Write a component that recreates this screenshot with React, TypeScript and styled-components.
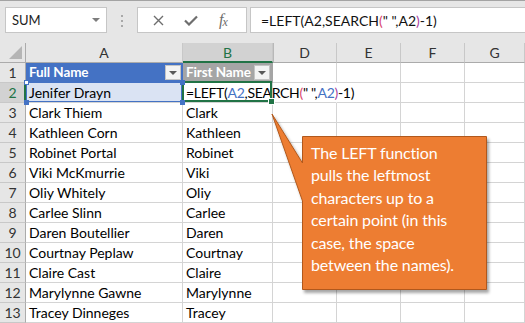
import React from "react";
import styled, { createGlobalStyle, css } from "styled-components";

const Global = createGlobalStyle`
  html, body { margin: 0; padding: 0; background: #fff; }
  * { box-sizing: border-box; }
`;

const Frame = styled.div`
  width: 525px;
  height: 323px;
  background: #e6e6e6;
  border-top: 1px solid #a3a3a3;
  overflow: hidden;
  position: relative;
  display: flex;
  flex-direction: column;
  font-family: Lato, "Liberation Sans", sans-serif;
`;

const Toolbar = styled.div`
  height: 42px;
  flex: none;
  display: flex;
  align-items: flex-start;
  padding: 6px 0 0 5px;
`;

const Box = styled.div`
  height: 26px;
  background: #fff;
  border: 1px solid #c6c6c6;
  display: flex;
  align-items: center;
`;

const NameBox = styled(Box)`
  width: 102px;
  padding: 0 6px;
  justify-content: space-between;
  font-size: 13px;
  color: #222;
`;

const Caret = styled.span`
  width: 0;
  height: 0;
  border-left: 4px solid transparent;
  border-right: 4px solid transparent;
  border-top: 4px solid #7d7d7d;
`;

const Dots = styled.div`
  width: 2px;
  margin: 8px 14px 0 14px;
  display: flex;
  flex-direction: column;
  gap: 3px;
  span { width: 2px; height: 2px; background: #a8a8a8; display: block; }
`;

const FuncBox = styled(Box)`
  width: 110px;
  padding-left: 15px;
  gap: 20px;
`;

const Fx = styled.span`
  font-family: "Liberation Serif", serif;
  font-style: italic;
  font-size: 16px;
  color: #6e6e6e;
  margin-left: 1px;
  letter-spacing: -1px;
  sub { font-size: 12px; vertical-align: baseline; position: relative; top: 1px; }
`;

const FormulaBox = styled(Box)`
  margin-left: 3px;
  flex: 1;
  margin-right: -10px;
  padding-left: 10px;
  font-size: 14px;
  color: #111;
  white-space: pre;
`;

const Sheet = styled.div`
  flex: 1;
  display: grid;
  grid-template-columns: 26px 157px 90px 64px 64px 64px 1fr;
  grid-template-rows: 20px repeat(13, 20px);
  background: #fff;
`;

const ColHead = styled.div<{ $sel?: boolean; $split?: boolean }>`
  background: ${(p) => (p.$sel ? "#d2d2d2" : "#e6e6e6")};
  border-right: 1px solid #c8c8c8;
  border-bottom: ${(p) => (p.$sel ? "2px solid #217346" : "1px solid #ababab")};
  color: ${(p) => (p.$sel ? "#217346" : "#333")};
  font-size: 14px;
  display: flex;
  align-items: center;
  justify-content: center;
  padding-top: ${(p) => (p.$sel ? "1px" : "0")};
  ${(p) => p.$split && css`box-shadow: inset 1px 0 0 #b8b8b8;`}
`;

const Corner = styled.div`
  background: #e6e6e6;
  border-right: 1px solid #ababab;
  border-bottom: 1px solid #ababab;
  display: flex;
  align-items: flex-end;
  justify-content: flex-end;
  padding: 0 3px 3px 0;
`;

const RowHead = styled.div<{ $sel?: boolean }>`
  background: ${(p) => (p.$sel ? "#d2d2d2" : "#e6e6e6")};
  border-right: ${(p) => (p.$sel ? "2px solid #217346" : "1px solid #ababab")};
  border-bottom: 1px solid #c8c8c8;
  color: ${(p) => (p.$sel ? "#217346" : "#333")};
  font-size: 14px;
  display: flex;
  align-items: center;
  justify-content: center;
  padding-left: ${(p) => (p.$sel ? "1px" : "0")};
`;

type Kind = "plain" | "headBlue" | "headGray" | "ref" | "active" | "spill";

const Cell = styled.div<{ $kind?: Kind }>`
  position: relative;
  border-right: 1px solid #d4d4d4;
  border-bottom: 1px solid #d4d4d4;
  padding-left: 3px;
  font-size: 14px;
  line-height: 19px;
  color: #000;
  white-space: nowrap;
  display: flex;
  align-items: center;
  ${(p) =>
    (p.$kind === "headBlue" || p.$kind === "headGray") &&
    css`
      background: ${p.$kind === "headBlue" ? "#4472c4" : "#a5a5a5"};
      border-color: ${p.$kind === "headBlue" ? "#4472c4" : "#a5a5a5"};
      color: #fff;
      font-weight: 700;
      font-size: 13.5px;
      letter-spacing: -0.1px;
      justify-content: space-between;
      padding-right: ${p.$kind === "headBlue" ? "1px" : "2px"};
    `}
  ${(p) =>
    p.$kind === "ref" &&
    css`
      background: #dae3f3;
      &::before {
        content: "";
        position: absolute;
        left: 0;
        top: -1px;
        right: 0;
        bottom: 0;
        border: 1px solid #4472c4;
      }
    `}
  ${(p) =>
    p.$kind === "active" &&
    css`
      z-index: 3;
      overflow: visible;
      letter-spacing: -0.3px;
      &::before {
        content: "";
        position: absolute;
        left: -1px;
        top: -2px;
        right: 0;
        bottom: 0;
        border: 2px solid #217346;
        pointer-events: none;
      }
      &::after {
        content: "";
        position: absolute;
        right: -3px;
        bottom: -3px;
        width: 5px;
        height: 5px;
        background: #217346;
        border: 1px solid #fff;
        box-sizing: content-box;
      }
    `}
  ${(p) =>
    p.$kind === "spill" &&
    css`
      border-right-color: transparent;
    `}
`;

const Handle = styled.span<{ $pos: "tl" | "tr" | "bl" | "br" }>`
  position: absolute;
  width: 5px;
  height: 5px;
  background: ${(p) => (p.$pos === "tl" ? "#fff" : "#4472c4")};
  border: 1px solid #4472c4;
  z-index: 4;
  ${(p) => (p.$pos[0] === "t" ? "top: -3px;" : "bottom: -3px;")}
  ${(p) => (p.$pos[1] === "l" ? "left: -2px;" : "right: -3px;")}
`;

const FilterBtn = styled.span`
  width: 16px;
  height: 15px;
  background: #f3f3f3;
  border: 1px solid #c4c4c4;
  display: flex;
  align-items: center;
  justify-content: center;
  flex: none;
`;

const FilterCaret = styled.span`
  width: 0;
  height: 0;
  border-left: 4px solid transparent;
  border-right: 4px solid transparent;
  border-top: 4px solid #595959;
`;

const RefText = styled.span`
  color: #4472c4;
`;

const Paren = styled.span<{ $c: string }>`
  color: ${(p) => p.$c};
`;

const Callout = styled.div`
  position: absolute;
  left: 266px;
  top: 108px;
  width: 232px;
  height: 192px;
  z-index: 10;
`;

const CalloutShape = styled.svg`
  position: absolute;
  left: 0;
  top: 0;
`;

const CalloutText = styled.div`
  position: relative;
  padding: 33px 0 0 45px;
  color: #fff;
  font-size: 16px;
  letter-spacing: -0.15px;
  line-height: 22.4px;
  span { display: block; white-space: nowrap; }
`;

const names: [string, string][] = [
  ["Clark Thiem", "Clark"],
  ["Kathleen Corn", "Kathleen"],
  ["Robinet Portal", "Robinet"],
  ["Viki McKmurrie", "Viki"],
  ["Oliy Whitely", "Oliy"],
  ["Carlee Slinn", "Carlee"],
  ["Daren Boutellier", "Daren"],
  ["Courtnay Peplaw", "Courtnay"],
  ["Claire Cast", "Claire"],
  ["Marylynne Gawne", "Marylynne"],
  ["Tracey Dinneges", "Tracey"],
];

const Formula = () => (
  <>
    =LEFT(<RefText>A2</RefText>,SEARCH<Paren $c="#d9466f">(</Paren>" ",<RefText>A2</RefText>
    <Paren $c="#a93f9f">)</Paren>-1)
  </>
);

const FormulaPlain = () => (
  <>
    =LEFT(A2,SEARCH<Paren $c="#d9466f">(</Paren>" ",A2<Paren $c="#a93f9f">)</Paren>-1)
  </>
);

const Empty = ({ n }: { n: number }) => (
  <>
    {Array.from({ length: n }).map((_, i) => (
      <Cell key={i} />
    ))}
  </>
);

export default function App() {
  return (
    <>
      <Global />
      <Frame>
        <Toolbar>
          <NameBox>
            SUM
            <Caret />
          </NameBox>
          <Dots>
            <span />
            <span />
            <span />
          </Dots>
          <FuncBox>
            <svg width="11" height="11" viewBox="0 0 11 11">
              <path d="M1 1 L10 10 M10 1 L1 10" stroke="#6e6e6e" strokeWidth="1.4" fill="none" />
            </svg>
            <svg width="14" height="11" viewBox="0 0 14 11">
              <path d="M1 5.5 L5 9.5 L13 1.5" stroke="#6e6e6e" strokeWidth="2.2" fill="none" />
            </svg>
            <Fx>
              f<sub>x</sub>
            </Fx>
          </FuncBox>
          <FormulaBox>
            <FormulaPlain />
          </FormulaBox>
        </Toolbar>
        <Sheet>
          <Corner>
            <svg width="14" height="13" viewBox="0 0 14 13">
              <polygon points="14,0 14,13 1,13" fill="#b5b5b5" />
            </svg>
          </Corner>
          <ColHead>A</ColHead>
          <ColHead $sel>B</ColHead>
          <ColHead $split>D</ColHead>
          <ColHead>E</ColHead>
          <ColHead>F</ColHead>
          <ColHead>G</ColHead>

          <RowHead>1</RowHead>
          <Cell $kind="headBlue">
            Full Name
            <FilterBtn>
              <FilterCaret />
            </FilterBtn>
          </Cell>
          <Cell $kind="headGray">
            First Name
            <FilterBtn>
              <FilterCaret />
            </FilterBtn>
          </Cell>
          <Empty n={4} />

          <RowHead $sel>2</RowHead>
          <Cell $kind="ref">
            Jenifer Drayn
            <Handle $pos="tl" />
            <Handle $pos="tr" />
            <Handle $pos="bl" />
            <Handle $pos="br" />
          </Cell>
          <Cell $kind="active">
            <Formula />
          </Cell>
          <Cell $kind="spill" />
          <Empty n={3} />

          {names.map(([full, first], i) => (
            <React.Fragment key={full}>
              <RowHead>{i + 3}</RowHead>
              <Cell>{full}</Cell>
              <Cell>{first}</Cell>
              <Empty n={4} />
            </React.Fragment>
          ))}
        </Sheet>

        <Callout>
          <CalloutShape width="232" height="192" viewBox="0 0 232 192">
            <defs>
              <filter id="sh" x="-10%" y="-10%" width="130%" height="130%">
                <feDropShadow dx="2" dy="3" stdDeviation="1.6" floodColor="#000" floodOpacity="0.35" />
              </filter>
            </defs>
            <polygon
              points="36.5,27.5 220.5,27.5 220.5,180.5 36.5,180.5 36.5,92 6,5 36.5,54"
              fill="#ed7d31"
              stroke="#b1591d"
              strokeWidth="1"
              filter="url(#sh)"
            />
          </CalloutShape>
          <CalloutText>
            <span>The LEFT function</span>
            <span>pulls the leftmost</span>
            <span>characters up to a</span>
            <span>certain point (in this</span>
            <span>case, the space</span>
            <span>between the names).</span>
          </CalloutText>
        </Callout>
      </Frame>
    </>
  );
}
